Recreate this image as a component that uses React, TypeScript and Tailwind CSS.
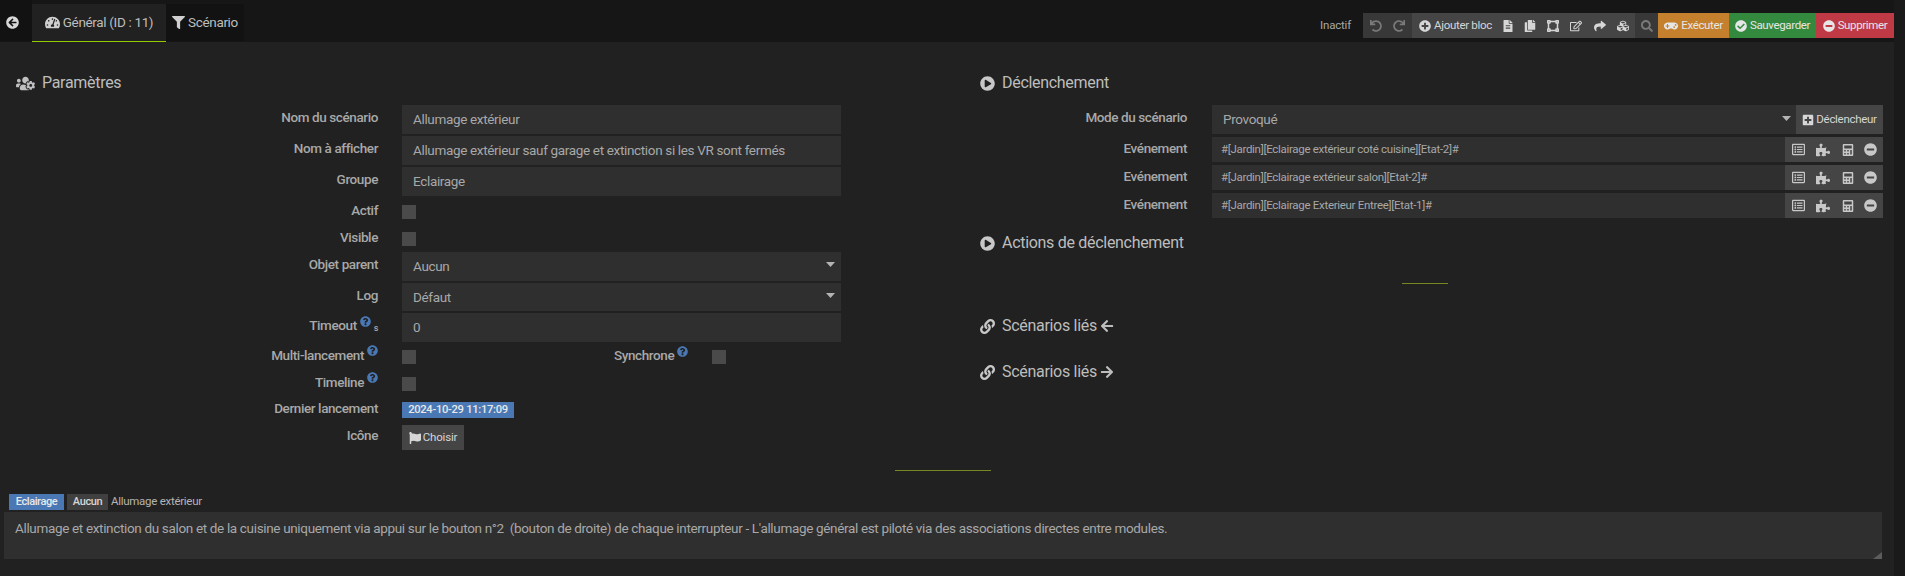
import React from "react";
import {
  FaArrowCircleLeft, FaTachometerAlt, FaFilter, FaUsersCog, FaPlayCircle, FaLink, FaArrowLeft, FaArrowRight,
  FaUndo, FaRedo, FaPlusCircle, FaFileAlt, FaCopy, FaVectorSquare, FaRegEdit, FaShare, FaCubes, FaSearch,
  FaGamepad, FaCheckCircle, FaMinusCircle, FaPlusSquare, FaRegListAlt, FaPuzzlePiece, FaCalculator, FaFlag, FaQuestionCircle,
} from "react-icons/fa";

const Q = () => <FaQuestionCircle className="text-[11px] text-[#4a78b4] ml-[3px] mb-[9px] shrink-0" />;

function Caret({ className = "" }: { className?: string }) {
  return (
    <svg width="9" height="5" viewBox="0 0 9 5" className={className}>
      <path d="M0 0h9L4.5 5z" fill="#b4b4b4" />
    </svg>
  );
}

function Label({ children, w = "w-[378px]" }: { children: React.ReactNode; w?: string }) {
  return (
    <div className={`${w} shrink-0 flex items-center justify-end text-[13.5px] tracking-[-0.4px] font-medium text-[#a8a8a8] mb-[4px] whitespace-nowrap`}>
      {children}
    </div>
  );
}

function Field({ label, value, caret, mt = "mt-[2px]", h = "h-[29px]" }: { label: React.ReactNode; value: string; caret?: boolean; mt?: string; h?: string }) {
  return (
    <div className={`flex items-center ${mt} ${h}`}>
      <Label>{label}</Label>
      <div className="ml-[24px] w-[439px] h-full bg-[#2f2f2f] flex justify-between pl-[11px] pr-[6px] text-[13.5px] tracking-[-0.34px] text-[#a8a8a8]">
        <span className="self-center">{value}</span>
        {caret && <Caret className="mt-[10px]" />}
      </div>
    </div>
  );
}

const Box = () => <div className="w-[14px] h-[14px] bg-[#4a4a4a] shrink-0" />;

function CheckRow({ label, mt, children }: { label: React.ReactNode; mt: string; children?: React.ReactNode }) {
  return (
    <div className={`flex items-center h-[14px] ${mt}`}>
      <Label>{label}</Label>
      <div className="ml-[24px]"><Box /></div>
      {children}
    </div>
  );
}

function Heading({ icon, children, left = "ml-[7px]" }: { icon: React.ReactNode; children: React.ReactNode; left?: string }) {
  return (
    <div className="flex items-center h-[24px] text-[16px] tracking-[-0.3px] text-[#bdbdbd] whitespace-nowrap">
      {icon}
      <span className={left}>{children}</span>
    </div>
  );
}

function EventRow({ label, value }: { label: string; value: string }) {
  return (
    <div className="flex items-center h-[25px] mt-[3px]">
      <div className="w-[207px] shrink-0 text-right text-[13.5px] tracking-[-0.4px] font-medium text-[#a8a8a8] mb-[2px]">{label}</div>
      <div className="ml-[25px] flex-1 h-full bg-[#2f2f2f] flex items-center pl-[9px] text-[11.5px] tracking-[-0.3px] text-[#a8a8a8]">{value}</div>
      <div className="w-[98px] h-full bg-[#454545] flex items-center text-[#c8c8c8] text-[13px]">
        <FaRegListAlt className="ml-[7px]" />
        <FaPuzzlePiece className="ml-[11px] text-[14px]" />
        <FaCalculator className="ml-[12px] text-[12px]" />
        <FaMinusCircle className="ml-[10px]" />
      </div>
    </div>
  );
}

function Btn({ w, bg, icon, children }: { w: string; bg: string; icon: React.ReactNode; children: React.ReactNode }) {
  return (
    <div className={`${w} ${bg} h-full flex items-center justify-center text-[11.5px] tracking-[-0.35px] text-[#e6e6e6] whitespace-nowrap`}>
      {icon}
      <span className="ml-[3px]">{children}</span>
    </div>
  );
}

export default function App() {
  return (
    <div className="w-[1905px] h-[576px] overflow-hidden flex bg-[#212121] font-['Roboto',sans-serif]">
      <div className="w-[1894px] shrink-0">
        {/* top bar */}
        <header className="h-[42px] bg-[#161616] flex items-start">
          <div className="w-[32px] h-[41px] pt-[4px] pl-[6px] bg-[#121212] flex items-center justify-start">
            <FaArrowCircleLeft className="text-[13px] text-[#d8d8d8] shrink-0" />
          </div>
          <div className="mt-[4px] w-[134px] h-[38px] bg-[#212121] border-b border-[#93ca02] flex items-center justify-center text-[13.5px] tracking-[-0.34px] text-[#bdbdbd]">
            <FaTachometerAlt className="text-[15px] text-[#cfcfcf] mr-[3px]" />
            Général (ID : 11)
          </div>
          <div className="mt-[4px] w-[78px] h-[37px] bg-[#121212] flex items-center justify-center text-[13.5px] tracking-[-0.34px] text-[#bdbdbd]">
            <FaFilter className="text-[13px] text-[#cfcfcf] mr-[3px]" />
            Scénario
          </div>
          <div className="flex-1 flex justify-end items-center h-[25px] mt-[13px]">
            <span className="text-[11.5px] tracking-[-0.2px] text-[#a8a8a8] mr-[12px]">Inactif</span>
            <div className="w-[49px] h-full bg-[#383838] flex items-center justify-center gap-[11px] text-[12px] text-[#7a7a7a]">
              <FaUndo /><FaRedo />
            </div>
            <div className="w-[223px] h-full bg-[#454545] flex items-center text-[#d6d6d6] text-[12px]">
              <FaPlusCircle className="ml-[7px]" />
              <span className="ml-[3px] text-[11.5px] tracking-[-0.3px] whitespace-nowrap">Ajouter bloc</span>
              <FaFileAlt className="ml-[10px]" />
              <FaCopy className="ml-[10px]" />
              <FaVectorSquare className="ml-[11px]" />
              <FaRegEdit className="ml-[11px]" />
              <FaShare className="ml-[12px]" />
              <FaCubes className="ml-[11px]" />
            </div>
            <div className="w-[23px] h-full bg-[#383838] flex items-center justify-center text-[12px] text-[#7a7a7a]">
              <FaSearch />
            </div>
            <Btn w="w-[71px]" bg="bg-[#c4802c]" icon={<FaGamepad className="text-[14px]" />}>Exécuter</Btn>
            <Btn w="w-[87px]" bg="bg-[#338a3e]" icon={<FaCheckCircle className="text-[12px]" />}>Sauvegarder</Btn>
            <Btn w="w-[78px]" bg="bg-[#bf3a45]" icon={<FaMinusCircle className="text-[12px]" />}>Supprimer</Btn>
          </div>
        </header>

        {/* two columns */}
        <div className="flex">
          <section className="w-[980px] shrink-0 pt-[29px]">
            <div className="pl-[16px]">
              <Heading icon={<FaUsersCog className="text-[19px] text-[#c0c0c0]" />}>Paramètres</Heading>
            </div>
            <Field mt="mt-[10px]" label="Nom du scénario" value="Allumage extérieur" />
            <Field label="Nom à afficher" value="Allumage extérieur sauf garage et extinction si les VR sont fermés" />
            <Field label="Groupe" value="Eclairage" />
            <CheckRow mt="mt-[9px]" label="Actif" />
            <CheckRow mt="mt-[13px]" label="Visible" />
            <Field mt="mt-[6px]" label="Objet parent" value="Aucun" caret />
            <Field h="h-[28px]" label="Log" value="Défaut" caret />
            <Field
              label={
                <>
                  Timeout
                  <Q />
                  <span className="text-[9px] ml-[3px] mt-[6px]">s</span>
                </>
              }
              value="0"
            />
            <CheckRow
              mt="mt-[8px]"
              label={
                <>
                  Multi-lancement
                  <Q />
                </>
              }
            >
              <div className="ml-[198px] flex items-center text-[13.5px] tracking-[-0.4px] font-medium text-[#a8a8a8] w-[98px] mb-[3px]">
                Synchrone
                <Q />
              </div>
              <Box />
            </CheckRow>
            <CheckRow
              mt="mt-[13px]"
              label={
                <>
                  Timeline
                  <Q />
                </>
              }
            />
            <div className="flex items-center h-[16px] mt-[11px]">
              <Label>Dernier lancement</Label>
              <div className="ml-[24px] w-[112px] h-full bg-[#4a78b4] flex items-center justify-center text-[11.2px] tracking-[-0.3px] font-medium text-[#e8e8e8] whitespace-nowrap">
                2024-10-29 11:17:09
              </div>
            </div>
            <div className="flex items-center h-[25px] mt-[7px]">
              <Label>Icône</Label>
              <div className="ml-[24px] w-[62px] h-full bg-[#454545] flex items-center justify-center text-[11.5px] tracking-[-0.2px] text-[#d6d6d6]">
                <FaFlag className="text-[12px] mr-[2px]" />
                Choisir
              </div>
            </div>
          </section>

          <section className="flex-1 pt-[29px] pr-[11px]">
            <Heading icon={<FaPlayCircle className="text-[15px] text-[#c8c8c8]" />}>Déclenchement</Heading>
            <div className="flex items-center h-[29px] mt-[10px]">
              <div className="w-[207px] shrink-0 text-right text-[13.5px] tracking-[-0.4px] font-medium text-[#a8a8a8] mb-[4px]">Mode du scénario</div>
              <div className="ml-[25px] flex-1 h-full bg-[#2f2f2f] flex justify-between pl-[11px] pr-[5px] text-[13.5px] tracking-[-0.34px] text-[#a8a8a8]">
                <span className="self-center">Provoqué</span>
                <Caret className="mt-[11px]" />
              </div>
              <div className="w-[87px] h-full bg-[#454545] flex items-center justify-center text-[11.5px] tracking-[-0.3px] text-[#d6d6d6]">
                <FaPlusSquare className="text-[12px] mr-[2px]" />
                Déclencheur
              </div>
            </div>
            <EventRow label="Evénement" value="#[Jardin][Eclairage extérieur coté cuisine][Etat-2]#" />
            <EventRow label="Evénement" value="#[Jardin][Eclairage extérieur salon][Etat-2]#" />
            <EventRow label="Evénement" value="#[Jardin][Eclairage Exterieur Entree][Etat-1]#" />
            <div className="mt-[13px]">
              <Heading icon={<FaPlayCircle className="text-[15px] text-[#c8c8c8]" />}>Actions de déclenchement</Heading>
            </div>
            <div className="mt-[28px] ml-[422px] w-[46px] h-px bg-[#76881f]" />
            <div className="mt-[30px]">
              <Heading icon={<FaLink className="text-[15px] text-[#c8c8c8]" />}>
                <span className="flex items-center">Scénarios liés<FaArrowLeft className="text-[14px] ml-[3px]" /></span>
              </Heading>
            </div>
            <div className="mt-[22px]">
              <Heading icon={<FaLink className="text-[15px] text-[#c8c8c8]" />}>
                <span className="flex items-center">Scénarios liés<FaArrowRight className="text-[14px] ml-[3px]" /></span>
              </Heading>
            </div>
          </section>
        </div>

        {/* divider */}
        <div className="mt-[20px] ml-[895px] w-[96px] h-px bg-[#76881f]" />

        {/* summary */}
        <div className="mt-[23px] pl-[9px] flex items-center h-[16px] text-[11.5px] whitespace-nowrap">
          <div className="w-[55px] h-full bg-[#4a78b4] flex items-center justify-center text-[11px] tracking-[-0.4px] font-medium text-[#e8e8e8]">Eclairage</div>
          <div className="ml-[3px] w-[41px] h-full bg-[#404040] flex items-center justify-center text-[11px] tracking-[-0.4px] font-medium text-[#d6d6d6]">Aucun</div>
          <span className="ml-[3px] tracking-[-0.28px] text-[#b4b4b4]">Allumage extérieur</span>
        </div>
        <div className="relative mt-[2px] ml-[4px] w-[1878px] h-[47px] bg-[#2f2f2f] pl-[11px] pt-[6px] text-[13.5px] tracking-[-0.34px] text-[#a8a8a8] whitespace-pre">
          {"Allumage et extinction du salon et de la cuisine uniquement via appui sur le bouton n°2  (bouton de droite) de chaque interrupteur - L'allumage général est piloté via des associations directes entre modules."}
          <svg width="9" height="7" viewBox="0 0 9 7" className="absolute right-0 bottom-0">
            <path d="M0 7 9 0v7z" fill="#5c5c5c" />
          </svg>
        </div>
      </div>
      <div className="flex-1 bg-[#1a1a1a]" />
    </div>
  );
}
